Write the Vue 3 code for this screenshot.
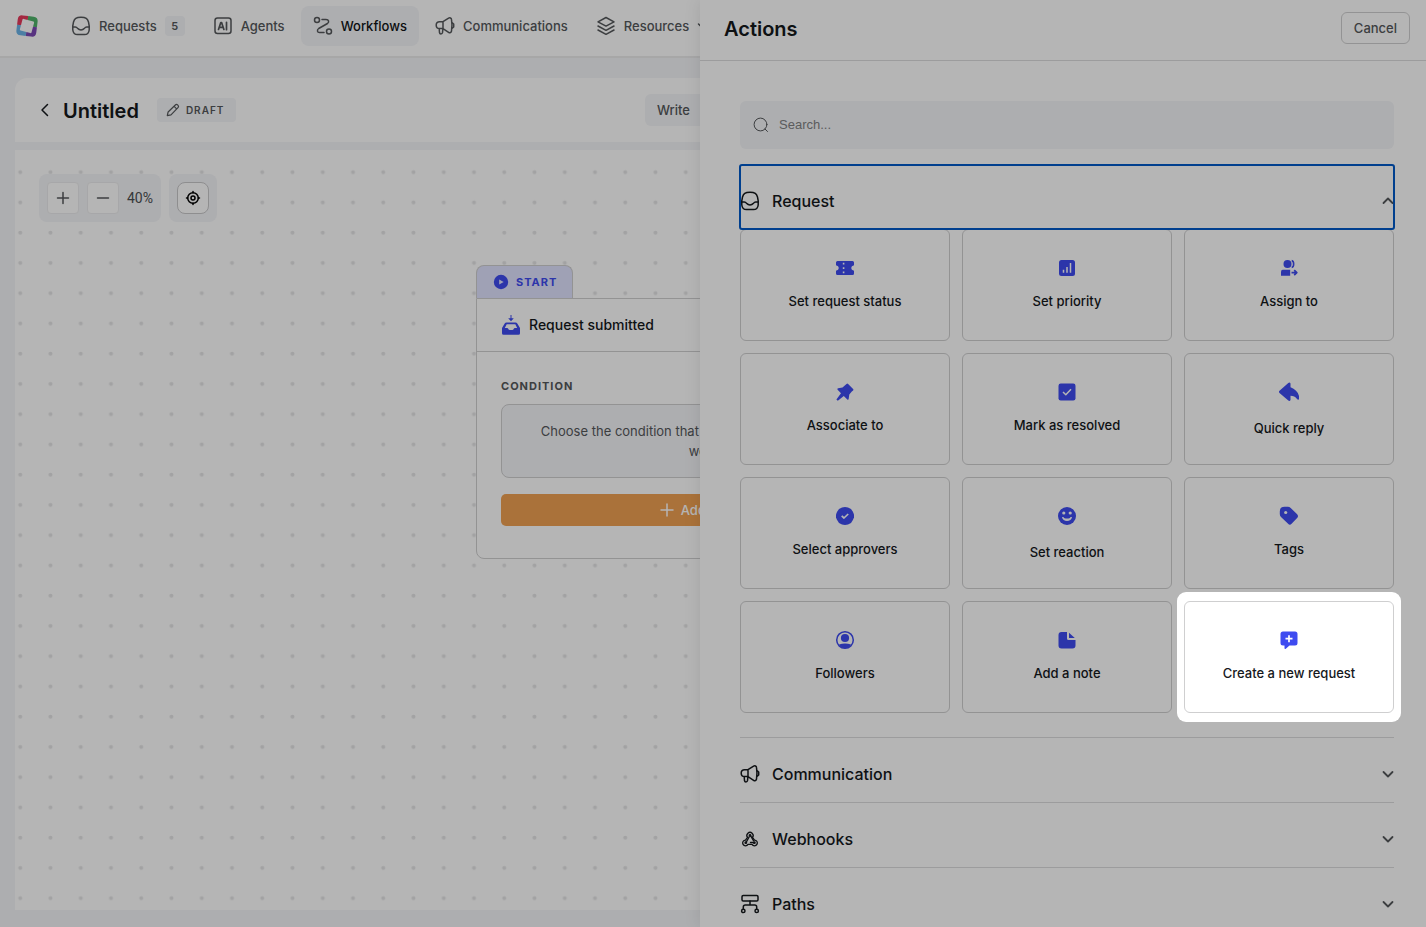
<script setup>
import { ref } from 'vue'

const search = ref('')

const cards = [
  { label: 'Set request status', icon: 'ticket' },
  { label: 'Set priority', icon: 'bars' },
  { label: 'Assign to', icon: 'assign' },
  { label: 'Associate to', icon: 'pin' },
  { label: 'Mark as resolved', icon: 'check' },
  { label: 'Quick reply', icon: 'reply', roomy: true },
  { label: 'Select approvers', icon: 'seal' },
  { label: 'Set reaction', icon: 'smile', roomy: true },
  { label: 'Tags', icon: 'tag' },
  { label: 'Followers', icon: 'person' },
  { label: 'Add a note', icon: 'note' },
  { label: 'Create a new request', icon: 'create', active: true }
]

const sections = [
  { label: 'Communication', icon: 'horn' },
  { label: 'Webhooks', icon: 'hook' },
  { label: 'Paths', icon: 'paths' }
]
</script>

<template>
  <div class="page">
    <svg class="defs" aria-hidden="true">
      <symbol id="inbox" viewBox="0 0 20 20">
        <path d="M10 1.300c5 0 6.500 1.200 7.500 4.700.8 3 1 5.500.7 8-.4 3.200-1.700 4.600-4.700 4.600h-7c-3 0-4.300-1.400-4.700-4.600-.3-2.500-.1-5 .7-8 1-3.500 2.500-4.700 7.500-4.700z" />
        <path d="M1.800 11h2.500c1.400 0 1.800.7 2.500 1.600 1.600 1.900 4.800 1.900 6.400 0 .7-.9 1.100-1.600 2.500-1.600h2.500" />
      </symbol>
      <symbol id="horn" viewBox="0 0 20 20">
        <path d="M8 5.700H4.500C2.500 5.700 1.200 7 1.200 9s1.300 3.600 3.300 3.600H8zM8 5.700l5.600-3.600c1.200-.7 2.700-.1 2.900 1.300.6 3.600.6 8.200 0 11.800-.2 1.400-1.700 1.900-2.900 1.100L8 12.600M4.200 12.700l.3 4c.2 1.600 2.700 1.600 3 0l.4-3.900M17 6.500l1.700 1.500v3L17 12.500" />
      </symbol>
      <symbol id="hook" viewBox="-1.500 -1.500 23 23">
        <path d="M7.100 8.100a3.600 3.600 0 1 1 5.800 0l2.300 3.100a3.300 3.300 0 1 1-2.900 5H7.700a3.300 3.300 0 1 1-2.900-5z" />
        <path d="M9 7.500l-3 5.500M10.800 6.500l3.200 5.300M10.500 14h4" />
        <circle cx="10" cy="6" r=".9" /><circle cx="5.200" cy="14.200" r=".9" /><circle cx="15" cy="14.200" r=".9" />
      </symbol>
      <symbol id="paths" viewBox="0 0 20 20">
        <rect x="2" y="1.500" width="16" height="5.500" rx="1.200" />
        <path d="M10 7v4M3.300 15v-2c0-1.300.7-2 2-2h9.400c1.300 0 2 .7 2 2v2" />
        <circle cx="3.300" cy="16.900" r="1.700" /><circle cx="16.700" cy="16.900" r="1.700" />
      </symbol>
      <symbol id="down" viewBox="0 0 12 12"><path d="M1.500 4l4.500 4.500L10.500 4" /></symbol>
    </svg>

    <header class="top">
      <a class="logo" href="#" aria-label="Home">
        <svg viewBox="0 0 22 22" width="22" height="22">
          <g transform="rotate(7 11 11)">
            <path d="M1 11V5.500Q1 1 5.500 1H11v10z" fill="#e83a5c" />
            <path d="M11 1h5.500Q21 1 21 5.500V11H11z" fill="#4fb46a" />
            <path d="M21 11v5.500Q21 21 16.500 21H11V11z" fill="#7d48b5" />
            <path d="M11 21H5.500Q1 21 1 16.500V11h10z" fill="#6cb4e8" />
          </g>
          <rect x="5" y="5" width="12" height="12" rx="1" fill="#fff" transform="rotate(15 11 11)" />
        </svg>
      </a>
      <nav class="nav">
        <a class="nav-item" href="#">
          <svg class="line"><use href="#inbox" /></svg>Requests<span class="count">5</span>
        </a>
        <a class="nav-item" href="#">
          <svg class="line" viewBox="0 0 20 20">
            <rect x="2" y="2" width="16" height="15.500" rx="2.500" />
            <path d="M5.500 13.500l2.300-7h.8l2.300 7M6.300 11.400h3.800M13.500 6.300v7.400" stroke-width="1.700" />
          </svg>Agents
        </a>
        <a class="nav-item current" href="#">
          <svg class="line" viewBox="0 0 20 20">
            <circle cx="4" cy="4" r="2.500" /><circle cx="16" cy="15.500" r="2.500" />
            <path d="M9 3.500h4c3 0 3.300 2.500 1.500 4l-8.800 5c-2 1.500-1.500 4 .8 4H11" />
          </svg>Workflows
        </a>
        <a class="nav-item" href="#">
          <svg class="line"><use href="#horn" /></svg>Communications
        </a>
        <a class="nav-item" href="#">
          <svg class="line" viewBox="0 0 20 20">
            <path d="M10 1.500l8 4.300-8 4.300-8-4.300zM2 10l8 4.300 8-4.300M2 14l8 4.300 8-4.300" />
          </svg>Resources
          <svg class="mini"><use href="#down" /></svg>
        </a>
      </nav>
    </header>

    <main class="work">
      <section class="titlebar">
        <div class="heading">
          <button class="back" type="button" aria-label="Back">
            <svg viewBox="0 0 12 14" width="12" height="14"><path d="M8.500 1.500L3 7l5.500 5.500" /></svg>
          </button>
          <h1>Untitled</h1>
          <span class="draft">
            <svg viewBox="0 0 14 14" width="14" height="14"><path d="M1.300 12.700l.8-3.700L9.600 1.800c1.300-1.200 3.800 1.300 2.600 2.600L5 11.900zM8.200 3.400l2.400 2.400" /></svg>
            DRAFT
          </span>
        </div>
        <button class="mode" type="button">Write</button>
      </section>

      <section class="canvas">
        <svg class="dots" width="100%" height="100%" aria-hidden="true">
          <pattern id="grid-dots" width="121" height="121" patternUnits="userSpaceOnUse" patternTransform="scale(.25)">
            <circle cx="21" cy="89" r="8" fill="#e5e5e6" />
          </pattern>
          <rect width="100%" height="100%" fill="url(#grid-dots)" />
        </svg>
        <div class="tools">
          <div class="tool-group">
            <button type="button" aria-label="Zoom in"><svg viewBox="0 0 14 14" width="14" height="14"><path d="M7 1.500v11M1.500 7h11" /></svg></button>
            <button type="button" aria-label="Zoom out"><svg viewBox="0 0 14 14" width="14" height="14"><path d="M1.500 7h11" /></svg></button>
            <span>40%</span>
          </div>
          <div class="tool-group">
            <button class="target" type="button" aria-label="Center">
              <svg viewBox="0 0 16 16" width="16" height="16"><circle cx="8" cy="8" r="5.300" /><circle cx="8" cy="8" r="2" /><path d="M8 1.500v1.200M8 13.300v1.200M1.500 8h1.200M13.300 8h1.200" /></svg>
            </button>
          </div>
        </div>

        <article class="node">
          <div class="node-tab">
            <svg viewBox="0 0 16 16" width="16" height="16"><circle cx="8" cy="8" r="7.200" fill="#3e4bf0" /><path d="M6.200 5.500v5L10.700 8z" fill="#e1e3ff" /></svg>
            START
          </div>
          <div class="node-card">
            <div class="node-title">
              <svg viewBox="0 0 20 20" width="20" height="20">
                <path d="M9.500 0h1v3.300h2.300L10 6.200 7.200 3.300h2.300z" />
                <path fill-rule="evenodd" d="M5.500 7.500h9q1.200 0 1.800 1L19 13v5.300q0 1.500-1.500 1.500h-15Q1 19.800 1 18.300V13l2.700-4.500q.6-1 1.800-1zM5.700 9.200L3.800 13h2.400q.6 0 1 .8.500 1.200 1.500 1.200h2.600q1 0 1.500-1.200.4-.8 1-.8h2.400l-1.900-3.800z" />
              </svg>
              <h2>Request submitted</h2>
            </div>
            <div class="node-body">
              <h3>CONDITION</h3>
              <p>Choose the condition that can be used to trigger this new<br>workflow</p>
              <button class="add" type="button">
                <svg viewBox="0 0 14 14" width="14" height="14"><path d="M7 1v12M1 7h12" /></svg>
                Add conditions
              </button>
            </div>
          </div>
        </article>
      </section>
    </main>

    <aside class="drawer">
      <header class="drawer-head">
        <h2>Actions</h2>
        <button type="button">Cancel</button>
      </header>
      <div class="drawer-body">
        <label class="search">
          <svg viewBox="0 0 16 16" width="16" height="16"><circle cx="7.500" cy="7.500" r="6.400" /><path d="M12 12l2.500 2.500" /></svg>
          <input v-model="search" type="text" placeholder="Search..." aria-label="Search actions">
        </label>

        <button class="fold focused" type="button" aria-expanded="true">
          <svg class="line"><use href="#inbox" /></svg>
          <span>Request</span>
          <svg class="chev up"><use href="#down" /></svg>
        </button>
        <div class="cards">
          <button v-for="card in cards" :key="card.label" type="button" class="card" :class="{ roomy: card.roomy, active: card.active }">
            <svg viewBox="0 0 20 20" width="20" height="20">
              <template v-if="card.icon === 'ticket'">
                <path d="M2.500 3h15q1.500 0 1.500 1.500v2.700q-2.800.5-2.800 2.800t2.800 2.800v2.700q0 1.500-1.500 1.500h-15Q1 17 1 15.500v-2.700Q3.800 12.300 3.800 10T1 7.200V4.500Q1 3 2.500 3z" />
                <path d="M8.600 4.800v10.800" stroke="#fff" stroke-width="1.600" stroke-dasharray="1.700 2.700" />
              </template>
              <template v-else-if="card.icon === 'bars'">
                <rect x="2" y="2" width="16" height="16" rx="2.500" />
                <path d="M6.500 11.800v3M10 9v5.800M13.500 5v9.800" stroke="#fff" stroke-width="1.500" />
              </template>
              <template v-else-if="card.icon === 'assign'">
                <circle cx="8.500" cy="6" r="4" />
                <path d="M12.700 2.600c2.600.3 2.600 6.500 0 6.800" fill="none" stroke="#3e4bf0" stroke-width="1.600" />
                <path d="M3.700 11.700h7.500v6H2v-3.800q0-2.200 1.700-2.200z" />
                <path d="M12.500 14.700h5M15.200 12.200l2.600 2.500-2.600 2.500" fill="none" stroke="#3e4bf0" stroke-width="1.700" />
              </template>
              <path v-else-if="card.icon === 'pin'" d="M11.500 1.900q.8-.8 1.600 0l5 5q.8.9 0 1.600l-1.300 1-2.500 3-.6 4.300q-.3 1.500-1.400.6L8.800 14l-6 4.700-1.400-1.300L6 11.300 2.600 7.700q-.9-1.100.6-1.400l4.300-.7z" />
              <template v-else-if="card.icon === 'check'">
                <rect x="1.500" y="1.500" width="17" height="17" rx="2.200" />
                <path d="M6 10l2.800 2.700L14 7.200" fill="none" stroke="#fff" stroke-width="1.500" />
              </template>
              <path v-else-if="card.icon === 'reply'" d="M11.500 1.500v3.700c5 1.700 8.300 5.500 8.800 10.500.2 2-1.300 2.700-2.300 1.200-1.500-2-3.800-3.200-6.500-3.200v4.200q-.7 1.800-2.200.6L.5 11Q-.7 9.900.5 8.800L9.300.9q1.500-1.200 2.200.6z" />
              <template v-else-if="card.icon === 'seal'">
                <path d="M10 1l3 .6L16 3l1.900 2.700L19 8.500v3L17.900 14 16 17l-3 1.400-3 .6-3-.6L4 17l-1.900-3L1 11.500v-3l1.100-2.800L4 3l3-1.400z" />
                <path d="M6.700 9.900L9 12l4.200-4" fill="none" stroke="#fff" stroke-width="1.700" />
              </template>
              <template v-else-if="card.icon === 'smile'">
                <circle cx="10" cy="10" r="9" />
                <circle cx="6.800" cy="7" r="1.600" fill="#fff" /><circle cx="13.200" cy="7" r="1.600" fill="#fff" />
                <path d="M5 11h10c-.5 5.200-9.500 5.200-10 0z" fill="#fff" />
                <path d="M6.500 11h7c0 2-7 2-7 0z" />
              </template>
              <template v-else-if="card.icon === 'tag'">
                <path d="M5.500.8h3.300q1.700 0 2.900 1.200l6.200 6q2.200 2.200 0 4.300l-5.300 5.500q-1.800 1.700-3.500 0L2 11Q.8 9.800.8 8V5.500Q.8.800 5.500.8z" />
                <circle cx="6.700" cy="6.500" r="1.600" fill="#fff" />
              </template>
              <template v-else-if="card.icon === 'person'">
                <circle cx="10" cy="10" r="8.300" fill="none" stroke="#3e4bf0" stroke-width="1.500" />
                <circle cx="10" cy="8" r="4.100" />
                <path d="M4 14.500c4-1.300 8-1.300 12 0-3 5-9 5-12 0z" />
              </template>
              <path v-else-if="card.icon === 'note'" d="M4.500 2H10v6.500q0 1.500 1.500 1.500h7v5.500q0 3-3 3h-11q-3 0-3-3V5q0-3 3-3zM12 2.700L17.800 8H12z" />
              <template v-else>
                <path d="M4 1.500h12q2.500 0 2.500 2.500v9q0 2.500-2.500 2.500h-5.500l-3.700 3.200q-1.300.8-1.300-.7v-2.500H4q-2.500 0-2.500-2.500V4Q1.500 1.500 4 1.500z" />
                <path d="M10 5.200v7M6.500 8.700h7" stroke="#fff" stroke-width="1.700" />
              </template>
            </svg>
            <span>{{ card.label }}</span>
          </button>
        </div>
        <button v-for="s in sections" :key="s.label" class="fold ruled" type="button" aria-expanded="false">
          <svg class="line"><use :href="'#' + s.icon" /></svg>
          <span>{{ s.label }}</span>
          <svg class="chev"><use href="#down" /></svg>
        </button>
      </div>
    </aside>
  </div>
</template>

<style>
body { margin: 0; }
</style>

<style scoped>
* { box-sizing: border-box; }
h1, h2, h3, p { margin: 0; }
button, input { font: inherit; color: inherit; margin: 0; padding: 0; border: 0; background: none; }
button { cursor: pointer; }
svg { flex: none; fill: none; stroke-linecap: round; stroke-linejoin: round; }
.card svg, .node-title svg { fill: #3e4bf0; stroke-linecap: butt; }
.defs { position: absolute; width: 0; height: 0; }
.page {
  position: relative; display: flex; flex-direction: column; height: 100vh; overflow: hidden;
  background: #f4f5f8; color: #15181c; font: 500 13px/18px Inter, "Liberation Sans", sans-serif;
}
.line { width: 20px; height: 20px; stroke: currentColor; stroke-width: 1.5; }

.top { display: flex; align-items: center; padding: 6px 16px 10px; background: #fff; border-bottom: 2px solid #ebebec; }
.logo { display: flex; margin-right: 21px; }
.nav { display: flex; gap: 4px; }
.nav-item { display: flex; align-items: center; gap: 8px; height: 40px; padding: 0 12px; border-radius: 8px; color: #55585b; text-decoration: none; white-space: nowrap; }
.current { background: #f4f5f8; color: #101316; }
.current .line { color: #55585b; }
.count { width: 20px; height: 20px; border-radius: 4px; background: #f4f5f8; font-size: 11px; font-weight: 600; line-height: 20px; text-align: center; }
.mini { width: 12px; height: 12px; stroke: currentColor; stroke-width: 1.5; }

.work { flex: 1; display: flex; flex-direction: column; gap: 8px; padding: 20px 15px 17px; min-height: 0; }
.titlebar { display: grid; grid-template-columns: 1fr 136px 1fr; align-items: center; height: 64px; padding: 0 24px; border-radius: 12px 12px 0 0; background: #fff; }
.heading { display: flex; align-items: center; }
.back { display: flex; margin-right: 12px; }
.back svg { stroke: #15181c; stroke-width: 1.5; }
h1 { padding-top: 2px; font-size: 20px; font-weight: 600; line-height: 28px; }
.draft { display: flex; align-items: center; gap: 6px; height: 24px; margin-left: 18px; padding: 0 12px 0 9px; border-radius: 4px; background: #f4f5f8; color: #55585b; font-size: 10px; font-weight: 600; letter-spacing: 1px; }
.draft svg { stroke: currentColor; stroke-width: 1.2; }
.mode { height: 32px; padding: 0 12px; border-radius: 6px; background: #f4f5f8; color: #55585b; text-align: left; }

.canvas { position: relative; flex: 1; background: #fff; overflow: hidden; padding: 24px; }
.dots { position: absolute; inset: 0; }
.tools { position: relative; display: flex; gap: 8px; }
.tool-group { display: flex; align-items: center; gap: 8px; height: 48px; padding: 8px; border-radius: 8px; background: #f4f5f8; color: #4c4f52; font: 400 14px/18px Roboto, sans-serif; }
.tool-group button { display: flex; align-items: center; justify-content: center; width: 32px; height: 32px; border: 1px solid #ececee; border-radius: 4px; background: #fff; }
.tool-group svg { stroke: #55585b; stroke-width: 1.5; }
.tool-group .target { border-color: #c8c8ca; border-radius: 8px; }
.tool-group .target svg { stroke: #000; }

.node { position: absolute; left: 461px; top: 115px; width: 482px; }
.node-tab { display: flex; align-items: center; gap: 7px; width: 97px; height: 33px; padding-left: 16px; border: 1px solid #cfcfd0; border-bottom: 0; border-radius: 8px 8px 0 0; background: #e1e3ff; color: #3e4bf0; font-size: 11px; font-weight: 700; letter-spacing: 1px; }
.node-card { border: 1px solid #cfcfd0; border-radius: 0 8px 8px 8px; background: #fff; }
.node-title { display: flex; align-items: center; gap: 8px; height: 53px; padding: 0 24px; border-bottom: 1px solid #cfcfd0; }
h2 { font-size: 14px; font-weight: 500; line-height: 20px; }
.node-body { padding: 25px 24px 32px; }
h3 { color: #55585b; font-size: 11px; font-weight: 700; line-height: 18px; letter-spacing: 1px; }
.node-body p { margin: 9px 0 16px; padding: 16px 8px; border: 1px solid #cfcfd0; border-radius: 8px; background: #f4f5f8; color: #55585b; font-weight: 400; line-height: 20px; text-align: center; white-space: nowrap; }
.add { display: flex; align-items: center; justify-content: center; gap: 7px; width: 100%; height: 32px; border-radius: 5px; background: #f0a152; color: #fff; }
.add svg { stroke: #fff; stroke-width: 1.5; }

.drawer { position: absolute; z-index: 2; top: 0; right: 0; bottom: 0; width: calc(50% + 13px); background: #fff; box-shadow: 0 0 16px rgba(0, 0, 0, .1); }
.drawer-head { display: flex; align-items: center; justify-content: space-between; height: 61px; padding: 0 16px 4px 24px; border-bottom: 1px solid #dcdcdd; }
.drawer-head h2 { padding-top: 2px; font-size: 20px; font-weight: 600; line-height: 28px; }
.drawer-head button { height: 32px; padding: 0 12px; border: 1px solid #d0d0d1; border-radius: 6px; color: #55585b; }
.drawer-body { padding: 40px 32px 0 40px; }
.search { display: flex; align-items: center; gap: 10px; height: 48px; margin-bottom: 16px; padding: 0 13px; border-radius: 6px; background: #f4f5f8; }
.search svg { stroke: #55585b; stroke-width: 1; }
.search input { flex: 1; outline: 0; font: 400 13px/18px "Liberation Sans", sans-serif; }
.search input::placeholder { color: #818284; opacity: 1; }
.fold { display: flex; align-items: center; gap: 12px; width: 100%; height: 64px; padding-top: 8px; font-size: 16px; line-height: 24px; text-align: left; }
.fold span { flex: 1; }
.focused { outline: 2px solid #005ac8; outline-offset: -1px; border-radius: 2px; position: relative; z-index: 1; }
.ruled { height: 65px; border-top: 1px solid #dcdcdd; }
.chev { width: 12px; height: 12px; stroke: #55585b; stroke-width: 1.8; }
.up { transform: rotate(180deg); }
.cards { display: grid; grid-template-columns: repeat(3, 1fr); gap: 12px; margin-bottom: 24px; }
.card { position: relative; display: flex; flex-direction: column; align-items: center; gap: 14px; height: 112px; padding-top: 28px; border: 1px solid #cfcfd0; border-radius: 6px; background: #fff; }
.roomy { gap: 17px; }
/* Spotlight: the ring stays lit while its spread shade dims the rest of the page. */
.active { z-index: 3; }
.active::before { content: ""; position: absolute; inset: -10px -8px; border-radius: 9px; box-shadow: 0 0 0 3000px rgba(0, 0, 0, .29); z-index: -1; background: #fff; }
.active::after { content: ""; position: absolute; inset: -1px; border: 1px solid #cfcfd0; border-radius: 6px; }
</style>
